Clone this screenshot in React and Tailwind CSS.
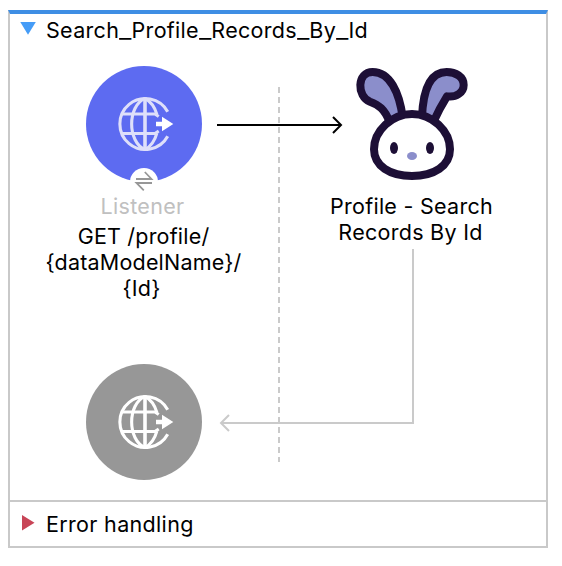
const font = "whitespace-nowrap font-['Inter','Liberation_Sans',sans-serif] text-[21.5px] leading-[26px]";

function Globe({ fill, line, arrow }) {
  return (
    <svg className="block shrink-0" width="116" height="116" viewBox="0 0 116 116" fill="none">
      <circle cx="58" cy="58" r="58" fill={fill} />
      <g stroke={line} strokeWidth="3.1">
        <path d="M81.7 45.7A25.5 25.5 0 1 0 81.7 70.3" />
        <path d="M59 32.4V83.6" strokeWidth="3.6" />
        <path d="M35 48H69L72.7 50.5M35 67.5H69L72.7 65" />
        <path d="M59 32.4C41.2 40 41.2 76 59 83.6" />
        <path d="M59 32.4C64.7 35.5 68.7 41 70.9 48.4M59 83.6C64.7 80.5 68.7 75 70.9 67.1" />
      </g>
      <path d="M70 55.7H76V50.7L87.3 58L76 65.3V60.3H70Z" fill={arrow} />
    </svg>
  );
}

function Bunny() {
  return (
    <svg className="mr-0.5 block shrink-0" width="130" height="136" viewBox="0 0 390 408">
      <g stroke="#1d0f36" strokeWidth="24" strokeLinejoin="round">
        <path d="M130 196C116 160 98 146 72 137C32 121 32 48 80 48C132 48 160 110 170 184" fill="#8b8ecb" />
        <path d="M263 196C278 162 290 142 303 121C330 125 353 110 353 87C353 62 329 48 302 48C252 48 231 105 228 184" fill="#8b8ecb" />
        <path d="M198 174C138 174 84 224 84 280C84 330 132 360 198 360C264 360 312 330 312 280C312 224 258 174 198 174Z" fill="#fff" />
      </g>
      <ellipse cx="144" cy="276" rx="12" ry="18" fill="#1d0f36" />
      <ellipse cx="252" cy="276" rx="12" ry="18" fill="#1d0f36" />
      <ellipse cx="198" cy="300" rx="15" ry="12" fill="#8b8ecb" />
    </svg>
  );
}

function Underscore() {
  return <span className="inline-block origin-left scale-x-[1.26] pr-[2.3px]">_</span>;
}

export default function App() {
  return (
    <div className="h-[566px] w-[562px] overflow-hidden bg-white px-2 pt-2.5 text-black">
      <div className="flex h-[538px] w-[540px] flex-col border-2 border-t-4 border-[#c9c9c9] border-t-[#3e8ee4]">
        <div className="relative flex h-[486px] w-full shrink-0 flex-col">
          <svg className="absolute -top-3.5 -left-2.5" width="546" height="500" fill="none">
            <path d="M279 87V462" stroke="#cacaca" strokeWidth="2" strokeDasharray="6 4" />
            <path d="M217 125H341M333 117L341 125L333 133" stroke="#000" strokeWidth="2" />
            <path d="M413 249V423H221M229 415L221 423L229 431" stroke="#cacaca" strokeWidth="2" />
          </svg>
          <header className="flex h-[42px] items-start pt-[3px] pl-2.5">
            <svg className="mt-[5px] mr-2.5" width="16" height="13" viewBox="0 0 16 13">
              <path d="M0.3 0H15.8L8 12.7Z" fill="#459cf7" />
            </svg>
            <h1 className={`${font} tracking-[0.3px]`}>
              Search<Underscore />Profile<Underscore />Records<Underscore />By<Underscore />Id
            </h1>
          </header>
          <div className="flex">
            <section className="flex w-[268px] flex-col items-center pt-2.5">
              <div className="relative">
                <Globe fill="#5d6bf1" line="#dedffa" arrow="#fff" />
                <svg className="absolute top-[102px] left-11" width="28" height="28" viewBox="0 0 28 28" fill="none">
                  <circle cx="14" cy="14" r="14" fill="#fff" />
                  <path d="M6 11H21.5L14.8 4M22 15H6.5L13.8 22.3" stroke="#979797" strokeWidth="1.8" />
                </svg>
              </div>
              <p className={`${font} mt-[11px] mr-[3px] tracking-[0.32px] text-[#c0c0c0]`}>Listener</p>
              <p className={`${font} mt-1 mr-px text-center tracking-[0.2px]`}>
                GET /profile/
                <br />
                {"{dataModelName}/"}
                <br />
                <span className="mr-1">{"{Id}"}</span>
              </p>
              <div className="mt-[63px]">
                <Globe fill="#979797" line="#fff" arrow="#fff" />
              </div>
            </section>
            <section className="flex w-[268px] flex-col items-center">
              <Bunny />
              <p className={`${font} mt-px mr-px text-center tracking-[0.28px]`}>
                Profile - Search
                <br />
                <span className="mr-0.5">Records By Id</span>
              </p>
            </section>
          </div>
        </div>
        <footer className="flex flex-1 items-center border-t-2 border-[#c9c9c9] pl-3">
          <svg className="-mt-[3px]" width="14" height="16" viewBox="0 0 14 16">
            <path d="M0 0L12.5 7.8L0 15.5Z" fill="#c84557" />
          </svg>
          <span className={`${font} ml-2.5 tracking-[0.33px]`}>Error handling</span>
        </footer>
      </div>
    </div>
  );
}
